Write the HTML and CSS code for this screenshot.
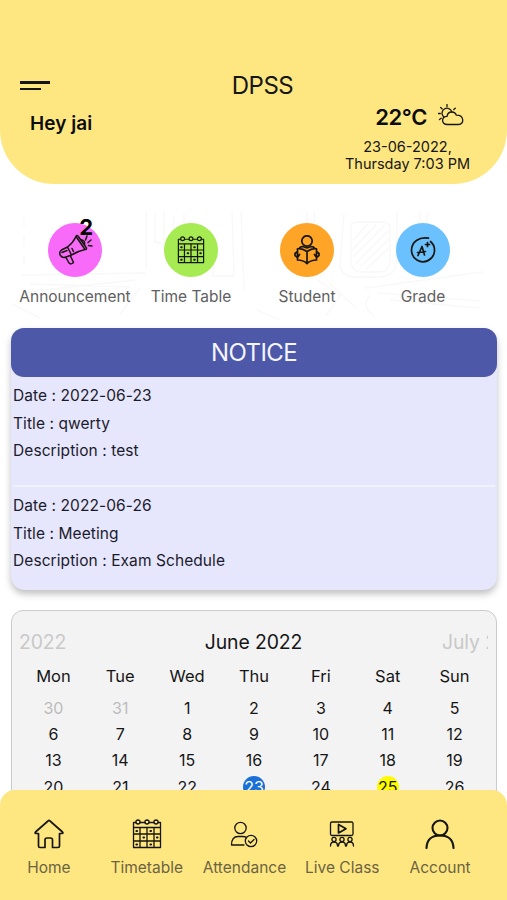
FILE: index.html
```
<!DOCTYPE html>
<html lang="en">
<head>
    <meta charset="UTF-8">
    <meta name="viewport" content="width=device-width, initial-scale=1">
    <title>DPSS</title>
    <link rel="stylesheet" href="styles.css">
</head>
<body>
    <!-- calendar icon shared by the shortcut and the bottom bar -->
    <svg class="defs" width="0" height="0">
        <symbol id="calendar" viewBox="0 0 30 30">
            <path d="M4 3.500H1.500V28.500H28.500V3.500H26M8 3.500H13M17 3.500H22M1.500 8.500H28.500M1.500 15H28.500M1.500 22H28.500M8 8.500V28.500M15 8.500V28.500M22 8.500V28.500"/>
            <path d="M4 4V2Q6 0 8 2V4Q6 6 4 4M13 4V2Q15 0 17 2V4Q15 6 13 4M22 4V2Q24 0 26 2V4Q24 6 22 4"/>
            <path class="dots" d="M4.500 12H5M18.500 12H19M11.500 18.500H12M25 18.500H25.500M4.500 25.500H5M18.500 25.500H19"/>
        </symbol>
    </svg>

    <header class="header">
        <div class="topbar">
            <div class="menu"><span></span><span></span></div>
            <h1>DPSS</h1>
        </div>
        <div class="greeting">
            <h2>Hey jai</h2>
            <div class="weather">
                <div class="temp">
                    <span>22°C</span>
                    <svg width="26" height="23" viewBox="0 0 26 23">
                        <path d="M9.500 20.500C2.500 20.500 3.500 12 9 12.300C10 6.500 17 7 18.300 11.200C26.500 11 26.500 20.500 20.500 20.500Z"/>
                        <path d="M5.500 12.800A5 5 0 1 1 13.800 7.800M9 .5V2.500M2.700 3.500L4.200 4.900M.5 9.500H2.300M1.500 15.500L3.200 14.200M17.300 4.300L15.800 5.600"/>
                    </svg>
                </div>
                <p>23-06-2022,<br>Thursday 7:03 PM</p>
            </div>
        </div>
    </header>

    <section class="shortcuts">
        <!-- faint classroom drawing behind the shortcuts -->
        <svg class="sketch" width="507" height="116" viewBox="0 0 507 116">
            <path d="M24 14V22M24 32V42M24 52V60M146 8V64M155 10V38L164 40V8M174 12L172 64M184 10V50M213 60V72H234L232 8M241 8L244 86M307 8V24M314 8L315 62M344 10L340 60Q340 70 352 73H382Q396 70 396 60L397 8M351 24Q350 18 358 18H382Q390 18 390 24V58Q388 68 380 68H362Q352 68 351 58ZM420 8V30M427 10V24"/>
            <path d="M22 71L145 69M30 80L130 83M26 88L135 76M140 84L120 110M318 76L340 92L326 112M330 80L356 104M366 84L482 68M378 89L480 97M390 96L480 104M12 100L40 114M255 105L280 116M370 92Q360 102 374 112"/>
            <path d="M353 36L368 20M353 45L376 21M354 52L384 22M356 59L388 27M361 62L388 36M366 65L388 45"/>
        </svg>
        <div class="shortcut">
            <div class="circle pink">
                <svg class="megaphone" width="38" height="32" viewBox="0 0 38 32">
                    <path d="M9.500 13L3.500 16Q.5 18.500 2.500 21.500Q4.500 24.500 8 23L13.500 21ZM9.500 13Q15 9 18 2.500L27 15.500Q20 17 13.500 21M18 2.500Q18.500 .8 20 2L28.500 14Q28.500 16 27 15.500M22.500 5.500Q27.500 6 26.500 11M8 23.500L11 29Q13 31 15.500 28.500L12.500 22M4 18.500L9 16.500M15.500 17.500L14 14.500M27.500 6L29 2M30 8.500L33 6M30.500 11.500L34 12"/>
                </svg>
                <span class="badge">2</span>
            </div>
            <span>Announcement</span>
        </div>
        <div class="shortcut">
            <div class="circle green">
                <svg width="28" height="28"><use href="#calendar"/></svg>
            </div>
            <span>Time Table</span>
        </div>
        <div class="shortcut">
            <div class="circle orange">
                <svg class="bold" width="26" height="30" viewBox="0 0 26 30">
                    <circle cx="13" cy="6" r="5.200"/>
                    <path d="M13 16.500Q8 13 3.500 13.800V25Q9 25 13 28.500Q17 25 22.500 25V13.800Q18 13 13 16.500V28.500M5.500 13Q7 11 9.500 11.800L13 13L16.500 11.800Q19 11 20.500 13M3.500 16.500L1 18.500V20.500L3.500 22.500L5.500 19.500M22.500 16.500L25 18.500V20.500L22.500 22.500L20.500 19.500"/>
                </svg>
            </div>
            <span>Student</span>
        </div>
        <div class="shortcut">
            <div class="circle blue">
                <svg class="bold" width="26" height="28" viewBox="0 0 26 28">
                    <path d="M18.500 2.200C9 .5 1.500 6 1.500 14.500A11.500 11.500 0 1 0 20.500 5.500M8 19.500L12 10.500L14.500 19M7.500 16.500L15.500 15.500M17.500 6.500V10.500M15.500 8.500H19.500"/>
                </svg>
            </div>
            <span>Grade</span>
        </div>
    </section>

    <section class="notice">
        <h3>NOTICE</h3>
        <div class="entry">
            <p>Date : 2022-06-23</p>
            <p>Title : qwerty</p>
            <p>Description : test</p>
        </div>
        <div class="entry">
            <p>Date : 2022-06-26</p>
            <p>Title : Meeting</p>
            <p>Description : Exam Schedule</p>
        </div>
    </section>

    <section class="calendar">
        <div class="months">
            <span class="prev">2022</span>
            <span class="current">June 2022</span>
            <span class="next">July 2022</span>
        </div>
        <div class="days weekdays">
            <span>Mon</span><span>Tue</span><span>Wed</span><span>Thu</span><span>Fri</span><span>Sat</span><span>Sun</span>
        </div>
        <div class="days">
            <span class="out">30</span><span class="out">31</span><span>1</span><span>2</span><span>3</span><span>4</span><span>5</span>
            <span>6</span><span>7</span><span>8</span><span>9</span><span>10</span><span>11</span><span>12</span>
            <span>13</span><span>14</span><span>15</span><span>16</span><span>17</span><span>18</span><span>19</span>
            <span>20</span><span>21</span><span>22</span><span class="today">23</span><span>24</span><span class="event">25</span><span>26</span>
        </div>
    </section>

    <nav class="tabs">
        <a>
            <svg class="bold" width="30" height="30" viewBox="0 0 30 30">
                <path d="M4.500 14.500V27Q4.500 28.500 6 28.500H11V21Q11 19 13 19H16.500Q18.500 19 18.500 21V28.500H24Q25.500 28.500 25.500 27V14.500H28Q29.500 14 28.500 13L16 2Q15 1 14 2L1.500 13Q.5 14 2 14.500Z"/>
            </svg>
            <span>Home</span>
        </a>
        <a>
            <svg width="30" height="30"><use href="#calendar"/></svg>
            <span>Timetable</span>
        </a>
        <a>
            <svg width="28" height="28" viewBox="0 0 28 28">
                <circle cx="10.500" cy="8" r="5.700"/>
                <path d="M14 25H1.500Q1.500 16.500 8 16.500H13Q15 16.500 16.500 17.500M18.500 21L20.500 23L24 19.500"/>
                <circle cx="21" cy="21" r="5.700"/>
            </svg>
            <span>Attendance</span>
        </a>
        <a>
            <svg width="26" height="28" viewBox="0 0 26 28">
                <rect x="1.500" y="2" width="22.500" height="13.500" rx="1.500"/>
                <path class="bold" d="M9.500 4.500V13L17 8.700Z"/>
                <circle cx="5" cy="19.500" r="2.100"/>
                <circle cx="13" cy="19.500" r="2.100"/>
                <circle cx="21" cy="19.500" r="2.100"/>
                <path d="M1.500 26Q1.500 22 5 22Q8.500 22 8.500 26M9.500 26Q9.500 22 13 22Q16.500 22 16.500 26M17.500 26Q17.500 22 21 22Q24.500 22 24.500 26"/>
            </svg>
            <span>Live Class</span>
        </a>
        <a>
            <svg class="heavy" width="30" height="30" viewBox="0 0 30 30">
                <circle cx="15" cy="9" r="7.500"/>
                <path d="M1.500 29Q2 16.500 15 16.500Q28 16.500 28.500 29"/>
            </svg>
            <span>Account</span>
        </a>
    </nav>
</body>
</html>
```
FILE: styles.css
```
* {
    box-sizing: border-box;
}
body {
    margin: 0;
    height: 900px;
    overflow: hidden;
    background-color: #FFFFFF;
    color: #161616;
    font-family: Inter, "Liberation Sans", sans-serif;
}
h1, h2, h3, p {
    margin: 0;
    font-weight: 400;
}
svg {
    display: block;
    fill: none;
    stroke: #17150f;
    stroke-width: 1.3;
    stroke-linecap: round;
    stroke-linejoin: round;
}
.bold {
    stroke-width: 1.7;
}
.heavy {
    stroke-width: 2.1;
}
.dots {
    stroke-width: 2.2;
}
.defs {
    position: absolute;
}
.header {
    height: 184px;
    padding-top: 70px;
    background-color: #fee781;
    border-radius: 0 0 54px 54px;
}
.topbar {
    display: grid;
    grid-template-columns: 50px 1fr 50px;
    align-items: center;
    height: 30px;
    padding: 0 2px 0 20px;
}
.menu span {
    display: block;
    width: 30px;
    height: 2.5px;
    background-color: #17150f;
}
.menu span + span {
    width: 21px;
    margin-top: 4px;
}
h1 {
    padding-top: 1px;
    font-size: 24px;
    line-height: 30px;
    text-align: center;
    letter-spacing: -0.5px;
}
.greeting {
    display: flex;
    justify-content: space-between;
    padding: 4px 32px 0 30px;
}
h2 {
    padding-top: 8px;
    font-size: 19px;
    line-height: 24px;
    font-weight: 600;
    letter-spacing: 0.05px;
    color: #0c0c0c;
}
.weather {
    width: 135px;
    text-align: center;
}
.temp {
    display: flex;
    align-items: center;
    justify-content: flex-end;
    gap: 11px;
    height: 26px;
    padding-right: 11px;
    font-size: 22px;
    font-weight: 600;
    letter-spacing: -0.4px;
    color: #0c0c0c;
}
.temp svg {
    margin-top: -3px;
}
.weather p {
    padding-top: 8px;
    font-size: 14.5px;
    line-height: 17px;
    white-space: nowrap;
}
.shortcuts {
    position: relative;
    display: flex;
    height: 144px;
    padding: 39px 26px 0 17px;
}
.sketch {
    position: absolute;
    top: 20px;
    left: 0;
    stroke: #f8f8f8;
}
.shortcut {
    position: relative;
    flex: 1;
    display: flex;
    flex-direction: column;
    align-items: center;
    gap: 10px;
    font-size: 15.5px;
    line-height: 20px;
    color: #606060;
}
.circle {
    position: relative;
    display: flex;
    justify-content: center;
    align-items: center;
    width: 54px;
    height: 54px;
    border-radius: 50%;
}
.pink {
    background-color: #f76bf8;
}
.green {
    background-color: #a5eb51;
}
.orange {
    background-color: #fea527;
}
.blue {
    background-color: #6bc1fd;
}
.megaphone {
    margin-left: 4px;
    stroke-width: 1.5;
}
.badge {
    position: absolute;
    top: -7px;
    right: 9px;
    font-size: 22px;
    line-height: 22px;
    font-weight: 700;
    color: #000000;
}
.notice {
    height: 262px;
    margin: 0 10px 0 11px;
    background-color: #e6e6fd;
    border-radius: 14px;
    box-shadow: 0 4px 7px rgba(0, 0, 0, 0.25);
}
h3 {
    height: 49px;
    background-color: #4d58a8;
    border-radius: 13px;
    color: #f4f5ff;
    font-size: 24px;
    line-height: 50px;
    text-align: center;
    letter-spacing: -0.6px;
}
.entry {
    height: 108px;
    margin: 0 2px;
    padding-top: 5px;
    font-size: 15.5px;
    line-height: 27.7px;
    letter-spacing: 0.08px;
    color: #1b1b2b;
}
.entry + .entry {
    border-top: 2px solid #f2f2fe;
}
.calendar {
    height: 230px;
    margin: 20px 10px 0 11px;
    padding: 17px 8px 0 8px;
    background-color: #f3f3f3;
    border: 1px solid #cbcbcb;
    border-radius: 12px;
}
.months {
    display: grid;
    grid-template-columns: 1fr auto 1fr;
    margin-left: -1px;
    line-height: 28px;
    font-size: 19.4px;
    letter-spacing: -0.1px;
    overflow: hidden;
    white-space: nowrap;
}
.prev, .next {
    color: #c9c9c9;
}
.next {
    width: 46px;
    margin-left: auto;
    overflow: hidden;
}
.days {
    display: grid;
    grid-template-columns: repeat(7, 1fr);
    grid-auto-rows: 26.4px;
    align-items: center;
    justify-items: center;
    padding-top: 5px;
    font-size: 16px;
}
.weekdays {
    padding-top: 7px;
    font-size: 16.5px;
}
.out {
    color: #bcbcbc;
}
.today, .event {
    width: 22px;
    height: 22px;
    border-radius: 50%;
    line-height: 22px;
    text-align: center;
}
.today {
    background-color: #1a70d8;
    color: #FFFFFF;
}
.event {
    background-color: #fffb00;
}
.tabs {
    position: fixed;
    left: 0;
    right: 0;
    bottom: 0;
    height: 110px;
    display: flex;
    padding: 29px 18px 0 0;
    background-color: #fee781;
    border-radius: 15px 15px 0 0;
}
.tabs a {
    flex: 1;
    display: flex;
    flex-direction: column;
    align-items: center;
    font-size: 15.5px;
    line-height: 20px;
    color: #6c6341;
    white-space: nowrap;
}
.tabs svg {
    height: 30px;
    margin-bottom: 9px;
}
```
